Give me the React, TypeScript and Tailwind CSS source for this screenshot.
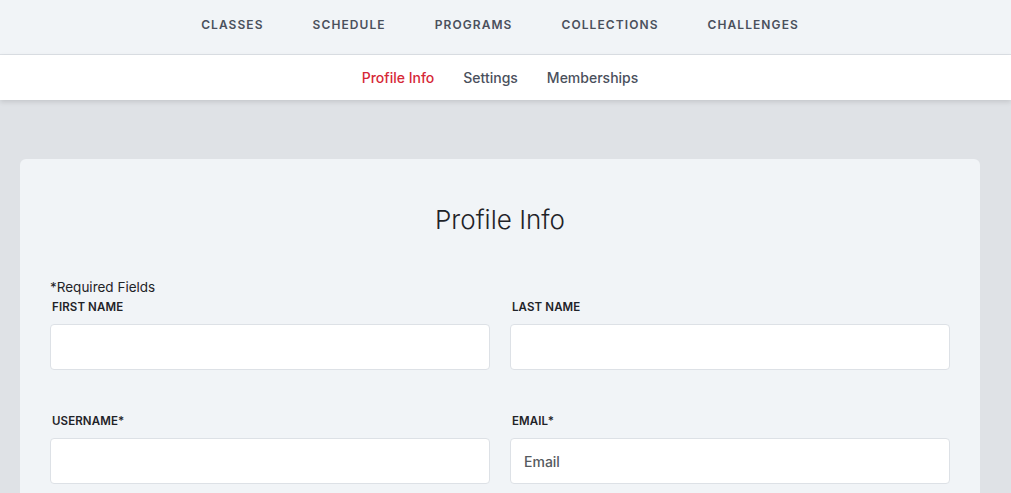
const topNav = ["CLASSES", "SCHEDULE", "PROGRAMS", "COLLECTIONS", "CHALLENGES"]
const subNav = ["Profile Info", "Settings", "Memberships"]

function Field({ label, placeholder }: { label: string; placeholder?: string }) {
  return (
    <div className="flex flex-col">
      <label className="text-[11.5px] font-semibold uppercase tracking-[0.01em] text-[#1f2328] pl-[2px] h-[17px] leading-[17px]">{label}</label>
      <input
        placeholder={placeholder}
        className="mt-[8px] h-[46px] w-full rounded-[4px] border border-[#dde1e6] bg-white px-[13px] text-[14px] font-medium text-[#333] placeholder:text-[#555a60] outline-none"
      />
    </div>
  )
}

export default function App() {
  return (
    <div className="min-h-screen bg-[#dfe2e6]" style={{ fontFamily: "Inter, 'Noto Sans', sans-serif" }}>
      {/* Top nav */}
      <div className="h-[55px] pb-[4px] pr-[11px] bg-[#f1f4f7] border-b border-[#dde1e6] flex items-center justify-center gap-[49px]">
        {topNav.map((item) => (
          <a key={item} className="text-[12px] font-semibold tracking-[0.09em] text-[#4a505c]">{item}</a>
        ))}
      </div>

      {/* Sub nav */}
      <div className="relative h-[45px] pr-[11px] bg-white flex items-center justify-center gap-[29px] shadow-[0_2px_5px_rgba(0,0,0,0.12)]">
        {subNav.map((item, i) => (
          <a key={item} className={`text-[14px] font-medium ${i === 0 ? "text-[#d62837]" : "text-[#4a505c]"}`}>{item}</a>
        ))}
      </div>

      {/* Card */}
      <div className="pl-[20px] pr-[31px] pt-[59px]">
        <div className="rounded-[6px] bg-[#f1f4f7] px-[30px] pt-[43px] pb-10">
          <h1 className="text-center text-[26px] font-light text-[#1f2328] leading-[36px]">Profile Info</h1>
          <p className="mt-[41px] text-[13.5px] text-[#1f2328] leading-[17px]">*Required Fields</p>
          <div className="mt-[3px] grid grid-cols-2 gap-x-[20px] gap-y-[43px]">
            <Field label="First Name" />
            <Field label="Last Name" />
            <Field label="Username*" />
            <Field label="Email*" placeholder="Email" />
          </div>
        </div>
      </div>
    </div>
  )
}
